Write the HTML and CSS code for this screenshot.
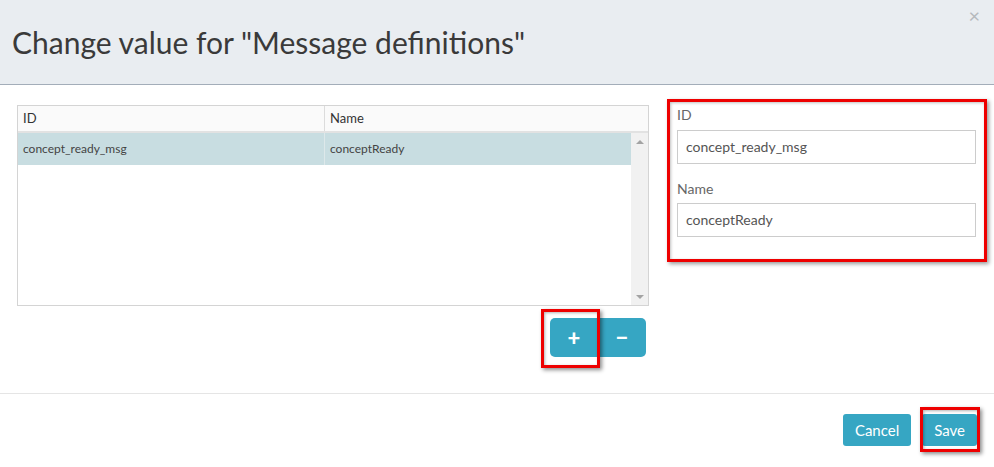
FILE: index.html
```html
<!DOCTYPE html>
<html>
<head>
<meta charset="utf-8">
<link rel="stylesheet" href="styles.css">
</head>
<body>
<div class="modal">
  <div class="modal-header">
    <h1 class="title">Change value for "Message definitions"</h1>
    <span class="close">&times;</span>
  </div>
  <div class="modal-body">
    <div class="left-col">
      <div class="grid">
        <div class="grid-head">
          <div class="cell col-id">ID</div>
          <div class="cell col-name">Name</div>
        </div>
        <div class="grid-viewport">
          <div class="rows">
            <div class="row selected">
              <div class="cell col-id">concept_ready_msg</div>
              <div class="cell col-name">conceptReady</div>
            </div>
          </div>
          <div class="scrollbar">
            <span class="arrow up"></span>
            <span class="arrow down"></span>
          </div>
        </div>
      </div>
      <div class="btn-row">
        <div class="btn-group">
          <button class="btn btn-icon">+</button>
          <button class="btn btn-icon">&minus;</button>
          <span class="highlight hl-plus"></span>
        </div>
      </div>
    </div>
    <div class="edit-panel">
      <label class="lbl">ID</label>
      <div class="input">concept_ready_msg</div>
      <label class="lbl lbl-2">Name</label>
      <div class="input">conceptReady</div>
    </div>
  </div>
  <div class="modal-footer">
    <button class="btn btn-text">Cancel</button>
    <div class="save-wrap">
      <button class="btn btn-text">Save</button>
      <span class="highlight hl-save"></span>
    </div>
  </div>
</div>
</body>
</html>
```

FILE: styles.css
```css
* { box-sizing: border-box; }
html, body { margin: 0; padding: 0; background: #fff; }
body {
  font-family: Lato, "Open Sans", "Liberation Sans", sans-serif;
  color: #333;
  width: 994px;
  height: 467px;
  overflow: hidden;
}
.modal-header {
  position: relative;
  height: 85px;
  background: #e9edf1;
  border-bottom: 1px solid #a3adb9;
  padding-left: 12px;
}
.title {
  margin: 0;
  padding-top: 24px;
  font-size: 30px;
  font-weight: 400;
  line-height: 36px;
  color: #3a3a3a;
}
.close {
  position: absolute;
  right: 14px;
  top: 3px;
  font-size: 20px;
  color: #b5b9bd;
  line-height: 24px;
}
.modal-body {
  display: flex;
  align-items: flex-start;
  height: 308px;
  padding: 14px 0 0 17px;
  gap: 18px;
}
.left-col {
  width: 632px;
  margin-top: 6px;
}
.grid {
  border: 1px solid #d4d4d4;
  height: 201px;
  display: flex;
  flex-direction: column;
  font-size: 12px;
  color: #444;
}
.grid-head {
  display: flex;
  height: 27px;
  border-bottom: 2px solid #e2e2e2;
  background: #fafafa;
  font-size: 13px;
  color: #333;
}
.grid-head .cell {
  line-height: 25px;
}
.cell {
  padding-left: 5px;
  white-space: nowrap;
}
.col-id {
  width: 307px;
  border-right: 1px solid #dcdcdc;
}
.col-name { flex: 1; }
.grid-viewport {
  flex: 1;
  display: flex;
}
.rows { flex: 1; }
.row {
  display: flex;
  height: 32px;
  line-height: 32px;
}
.row.selected { background: #c8dde1; }
.row .col-id { border-right: 1px solid #dde8ea; }
.scrollbar {
  width: 17px;
  background: #f1f1f1;
  display: flex;
  flex-direction: column;
  justify-content: space-between;
  align-items: center;
  padding: 7px 0 6px;
}
.arrow {
  width: 0; height: 0;
  border-left: 4px solid transparent;
  border-right: 4px solid transparent;
}
.arrow.up { border-bottom: 4px solid #a3a3a3; }
.arrow.down { border-top: 4px solid #a3a3a3; }
.btn-row {
  display: flex;
  justify-content: flex-end;
  margin-top: 12px;
  padding-right: 3px;
}
.btn-group {
  position: relative;
  display: flex;
}
.btn {
  font-family: Lato, "Open Sans", "Liberation Sans", sans-serif;
  background: #36a6c3;
  color: #fff;
  border: none;
  cursor: pointer;
}
.btn-icon {
  width: 48px;
  height: 39px;
  font-size: 22px;
  font-weight: 900;
  line-height: 39px;
  padding: 0 0 2px;
}
.btn-icon:first-child { border-radius: 5px 0 0 5px; }
.btn-icon:nth-child(2) { border-radius: 0 5px 5px 0; }
.highlight {
  position: absolute;
  border: 3px solid #ee0000;
  box-shadow: 2px 2px 4px rgba(0,0,0,0.45), inset 1px 1px 3px rgba(0,0,0,0.3);
  pointer-events: none;
}
.hl-plus {
  left: -9px;
  top: -9px;
  width: 59px;
  height: 59px;
}
.edit-panel {
  width: 320px;
  height: 163px;
  border: 3px solid #ee0000;
  box-shadow: 2px 2px 4px rgba(0,0,0,0.4), inset 1px 1px 3px rgba(0,0,0,0.25);
  padding: 3px 8px 0 7px;
  display: flex;
  flex-direction: column;
}
.lbl {
  font-size: 14px;
  line-height: 20px;
  color: #666;
  margin-bottom: 5px;
}
.lbl-2 { margin-top: 15px; margin-bottom: 4px; }
.input {
  height: 34px;
  border: 1px solid #ccc;
  padding-left: 8px;
  font-size: 14px;
  line-height: 32px;
  color: #555;
}
.modal-footer {
  border-top: 1px solid #e5e5e5;
  display: flex;
  justify-content: flex-end;
  align-items: flex-start;
  padding: 20px 17px 0 0;
  gap: 11px;
}
.btn-text {
  height: 32px;
  font-size: 15px;
  padding: 0 12px;
  border-radius: 3px;
  line-height: 32px;
}
.save-wrap { position: relative; }
.hl-save {
  left: -2px;
  top: -7px;
  width: 60px;
  height: 45px;
}
```
